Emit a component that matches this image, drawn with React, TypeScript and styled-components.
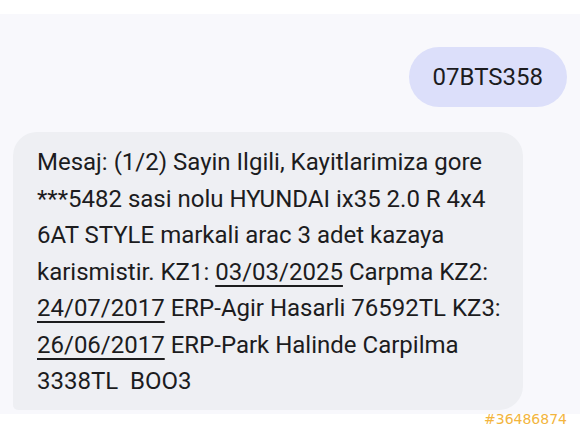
import React from 'react';
import styled, { createGlobalStyle } from 'styled-components';

const GlobalStyle = createGlobalStyle`
  html, body {
    margin: 0;
    padding: 0;
    background: #ffffff;
  }
  body {
    font-family: Roboto, "Noto Sans", sans-serif;
    color: #1c1c1e;
  }
`;

const Screen = styled.div`
  position: relative;
  width: 580px;
  height: 435px;
  padding-top: 14px;
  box-sizing: border-box;
  background: #ffffff;
  overflow: hidden;
`;

const Thread = styled.div`
  display: flex;
  flex-direction: column;
  gap: 25px;
  height: 400px;
  padding: 33px 13px 0;
  box-sizing: border-box;
  background: #f8f8fc;
`;

const SentBubble = styled.div`
  align-self: flex-end;
  display: flex;
  align-items: center;
  height: 60px;
  padding: 0 24px;
  border-radius: 30px;
  background: #dcdffa;
  font-size: 24px;
`;

const ReceivedBubble = styled.div`
  align-self: flex-start;
  width: 510px;
  padding: 12px 24px 10px;
  box-sizing: border-box;
  border-radius: 24px 24px 24px 5px;
  background: #eeeff3;
  font-size: 24px;
  line-height: 36.5px;
`;

const Line = styled.div`
  white-space: pre;
`;

const DateLink = styled.span`
  text-decoration: underline;
  text-decoration-thickness: 2px;
  text-underline-offset: 5px;
`;

const Tag = styled.span`
  position: absolute;
  right: 13px;
  bottom: 8px;
  font-family: "DejaVu Sans", sans-serif;
  font-size: 14px;
  color: #f3b53d;
`;

const App: React.FC = () => (
  <>
    <GlobalStyle />
    <Screen>
      <Thread>
        <SentBubble>07BTS358</SentBubble>
        <ReceivedBubble>
          <Line>Mesaj: (1/2) Sayin Ilgili, Kayitlarimiza gore</Line>
          <Line>***5482 sasi nolu HYUNDAI ix35 2.0 R 4x4</Line>
          <Line>6AT STYLE markali arac 3 adet kazaya</Line>
          <Line>
            karismistir. KZ1: <DateLink>03/03/2025</DateLink> Carpma KZ2:
          </Line>
          <Line>
            <DateLink>24/07/2017</DateLink> ERP-Agir Hasarli 76592TL KZ3:
          </Line>
          <Line>
            <DateLink>26/06/2017</DateLink> ERP-Park Halinde Carpilma
          </Line>
          <Line>3338TL  BOO3</Line>
        </ReceivedBubble>
      </Thread>
      <Tag>#36486874</Tag>
    </Screen>
  </>
);

export default App;
